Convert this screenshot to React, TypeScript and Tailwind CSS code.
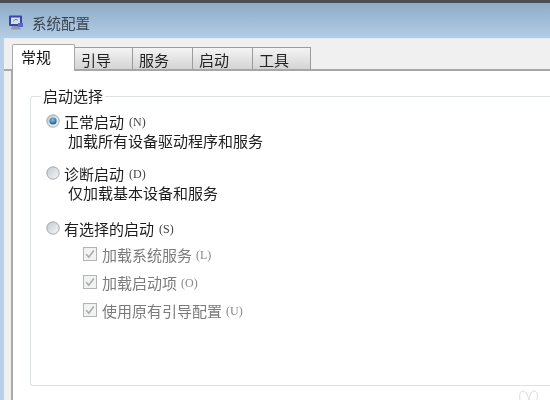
const cjk = "font-['Microsoft_YaHei','Noto_Sans_CJK_SC','Noto_Sans_CJK_JP',sans-serif]";

const tabs = [
  { label: "引导", width: "w-[58px]" },
  { label: "服务", width: "w-[60px]" },
  { label: "启动", width: "w-[60px]" },
  { label: "工具", width: "w-[58px]" },
];

function Radio({ checked }: { checked?: boolean }) {
  return (
    <svg width="14" height="14" viewBox="0 0 14 14" className="shrink-0">
      <defs>
        <radialGradient id="dot" cx="0.45" cy="0.35" r="0.7">
          <stop offset="0" stopColor="#7fc4ea" />
          <stop offset="1" stopColor="#12537f" />
        </radialGradient>
        <linearGradient id="well" x1="0" y1="0" x2="1" y2="1">
          <stop offset="0" stopColor="#c4c8cc" />
          <stop offset="1" stopColor="#f7f8f8" />
        </linearGradient>
      </defs>
      <circle cx="7" cy="7" r="6.2" fill="url(#well)" stroke="#9aa2a8" strokeWidth="0.9" />
      {checked && <circle cx="7" cy="7" r="3.6" fill="url(#dot)" />}
    </svg>
  );
}

function Check({ label, hint }: { label: string; hint: string }) {
  return (
    <div className="flex h-[28px] items-center">
      <svg width="14" height="14" viewBox="0 0 14 14" className="mr-[5px] shrink-0">
        <rect x="0.5" y="0.5" width="13" height="13" fill="#f2f2f2" stroke="#b4b4b4" />
        <path d="M3.2 7.2 L5.8 10.2 L10.8 3.4" fill="none" stroke="#a9b0b0" strokeWidth="1.7" />
      </svg>
      <span className="text-[15px] leading-none text-[#7b7b7b]">{label}</span>
      <span className="ml-[4px] mt-[2px] font-['Liberation_Serif',serif] text-[12px] leading-none text-[#8a8a8a]">{hint}</span>
    </div>
  );
}

function Option({
  label,
  hint,
  detail,
  checked,
}: {
  label: string;
  hint: string;
  detail?: string;
  checked?: boolean;
}) {
  return (
    <div>
      <div className="flex h-[20px] items-center">
        <Radio checked={checked} />
        <span className="ml-[4px] text-[15px] leading-none text-[#1c1c1c]">{label}</span>
        <span className="ml-[5px] mt-[2px] font-['Liberation_Serif',serif] text-[12px] leading-none text-[#444]">{hint}</span>
      </div>
      {detail && <div className="flex h-[19px] items-center pl-[22px] text-[15px] leading-none text-[#1c1c1c]">{detail}</div>}
    </div>
  );
}

export default function App() {
  return (
    <div className={`relative flex h-[400px] w-[550px] flex-col overflow-hidden bg-white blur-[0.4px] ${cjk}`}>
      <div className="h-[3px] shrink-0 bg-[#4a4f55]" />

      <div className="flex h-[35px] shrink-0 items-center bg-gradient-to-b from-[#8fabc6] to-[#b4cde6] pl-[7px] pt-[5px]">
        <svg width="18" height="18" viewBox="0 0 18 18" className="mr-[7px] shrink-0">
          <rect x="2" y="1.5" width="13" height="10.5" rx="1" fill="#3a44a8" />
          <rect x="4" y="3.5" width="9" height="6.5" fill="#cfe2ee" />
          <path d="M6 7.5 L9 5 L11 6.5" fill="none" stroke="#5f8fae" strokeWidth="1" />
          <path d="M5 12 h7 l2 3.5 h-10 z" fill="#8f9aa8" />
          <rect x="11" y="9" width="5" height="4" fill="#5b68c4" />
        </svg>
        <span className="text-[14.5px] leading-none text-[#3a4550]">系统配置</span>
      </div>

      <div className="flex min-h-0 flex-1">
        <div className="w-[4px] shrink-0 bg-[#b8d0ea]" />
        <div className="flex min-w-0 flex-1 flex-col bg-[#f0f0f0]">
          <div className="h-[1px] shrink-0 bg-[#e4ebf3]" />
          <div className="flex h-[32px] shrink-0 items-end border-b-2 border-[#a5a8ab] pl-[8px]">
            <div className="relative z-10 -mb-[2px] flex h-[27px] w-[63px] items-start rounded-t-[2px] border border-b-0 border-[#a8a8a8] bg-white pl-[8px] pt-[2px] text-[15px] leading-[20px] text-[#111]">
              常规
            </div>
            {tabs.map((tab) => (
              <div
                key={tab.label}
                className={`flex h-[22px] items-center border border-b-0 border-l-0 border-[#9c9c9c] bg-gradient-to-b from-[#f4f4f4] to-[#d4d4d4] pl-[6px] pt-[1px] text-[15px] leading-none text-[#222] ${tab.width}`}
              >
                {tab.label}
              </div>
            ))}
          </div>

          <div className="flex min-h-0 flex-1 pl-[7px]">
            <div className="min-w-0 flex-1 border-l-2 border-[#a8a8ae] bg-white pl-[17px] pt-[17px]">
              <fieldset className="h-[298px] rounded-l-[3px] border border-r-0 border-[#dce2e4] pl-[15px] pt-[7px]">
                <legend className="-ml-[5px] px-[2px] text-[15px] leading-[16px] text-[#1c1c1c]">启动选择</legend>
                <Option label="正常启动" hint="(N)" detail="加载所有设备驱动程序和服务" checked />
                <div className="mt-[13px]">
                  <Option label="诊断启动" hint="(D)" detail="仅加载基本设备和服务" />
                </div>
                <div className="mt-[16px]">
                  <Option label="有选择的启动" hint="(S)" />
                </div>
                <div className="mt-[2px] pl-[37px]">
                  <Check label="加载系统服务" hint="(L)" />
                  <Check label="加载启动项" hint="(O)" />
                  <Check label="使用原有引导配置" hint="(U)" />
                </div>
              </fieldset>
            </div>
          </div>
        </div>
      </div>

      <svg width="22" height="10" viewBox="0 0 22 10" className="absolute bottom-0 right-[10px]">
        <path d="M11 10 C9 3 7 1 5 1 C2 1 1 5 2 10 M11 10 C12 3 14 1 16 1 C19 1 20 5 19 10" fill="none" stroke="#dcdcdc" strokeWidth="1" />
      </svg>
    </div>
  );
}
